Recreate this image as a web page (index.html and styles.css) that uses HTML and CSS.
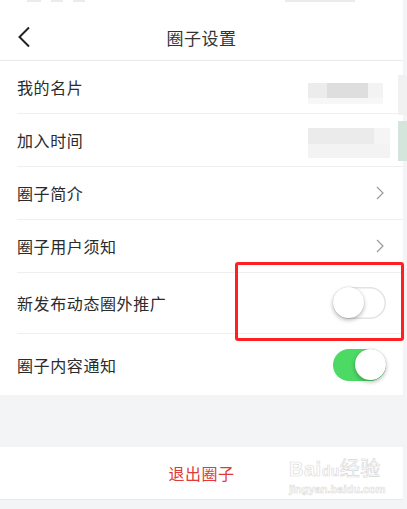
FILE: index.html
```html
<!DOCTYPE html>
<html lang="zh">
<head>
<meta charset="utf-8">
<link rel="stylesheet" href="styles.css">
</head>
<body>
<div class="page">
  <header class="nav">
    <div class="status"><span class="s1"></span><span class="s2"></span><span class="s3"></span><span class="s4"></span></div>
    <svg class="back" width="14" height="22" viewBox="0 0 14 22"><path d="M12 1.5 L2.5 11 L12 20.5" fill="none" stroke="#222" stroke-width="2"/></svg>
    <h1 class="title">圈子设置</h1>
  </header>
  <section class="list">
    <div class="row">
      <span class="label">我的名片</span>
      <div class="blur blur-a"><i></i><i></i></div>
      <div class="edge edge-a"></div>
    </div>
    <div class="row">
      <span class="label">加入时间</span>
      <div class="blur blur-b"><i></i><i></i></div>
      <div class="edge edge-b"></div>
    </div>
    <div class="row">
      <span class="label">圈子简介</span>
      <svg class="chev" width="8" height="14" viewBox="0 0 8 14"><path d="M1 1 L7 7 L1 13" fill="none" stroke="#9a9a9a" stroke-width="1.2"/></svg>
    </div>
    <div class="row">
      <span class="label">圈子用户须知</span>
      <svg class="chev" width="8" height="14" viewBox="0 0 8 14"><path d="M1 1 L7 7 L1 13" fill="none" stroke="#9a9a9a" stroke-width="1.2"/></svg>
    </div>
    <div class="row tall">
      <span class="label">新发布动态圈外推广</span>
      <span class="switch"><span class="knob"></span></span>
      <div class="mark"></div>
    </div>
    <div class="row tall last">
      <span class="label">圈子内容通知</span>
      <span class="switch on"><span class="knob"></span></span>
    </div>
  </section>
  <div class="gap"></div>
  <section class="exit">
    <span class="exit-text">退出圈子</span>
    <div class="wm"><div class="wm1">Bai<span class="paw">du</span><span class="cjk">经验</span></div><div class="wm2">jingyan.baidu.com</div></div>
  </section>
</div>
</body>
</html>
```
FILE: styles.css
```css
html, body { margin: 0; padding: 0; }
*, *::before, *::after { box-sizing: border-box; }
body {
  width: 407px;
  height: 509px;
  overflow: hidden;
  background: #f2f4f6;
  font-family: "Noto Sans CJK SC", "Noto Sans", sans-serif;
  color: #2a2a2a;
}
.page { width: 403px; }
.nav {
  position: relative;
  height: 61px;
  background: #fff;
  border-bottom: 1px solid #e9e9e9;
  display: flex;
  align-items: center;
  justify-content: center;
}
.status { position: absolute; left: 27px; top: 0; display: flex; gap: 10px; }
.status span { display: block; height: 2px; background: #ebebeb; }
.status .s1 { width: 14px; }
.status .s2 { width: 12px; }
.status .s3 { width: 12px; margin-right: 190px; }
.status .s4 { width: 70px; }
.back { position: absolute; left: 17px; top: 26px; }
.title {
  margin: 14px 0 0 0;
  font-size: 17px;
  font-weight: 400;
  color: #333;
  letter-spacing: 0.5px;
}
.list { background: #fff; padding-left: 17px; }
.row {
  position: relative;
  height: 53px;
  display: flex;
  align-items: center;
  justify-content: space-between;
  border-bottom: 1px solid #efefef;
  padding-right: 17px;
}
.row.tall { height: 61px; }
.row.last { border-bottom: none; }
.label { font-size: 16px; color: #2b2b2b; letter-spacing: 0.6px; }
.chev { margin-right: 2px; }
.blur { position: absolute; left: 291px; display: flex; flex-direction: column; }
.blur i { display: block; }
.blur-a { top: 22px; }
.blur-a i:first-child { width: 75px; height: 15px; background: linear-gradient(90deg, #ececec 0 25%, #dedede 25% 80%, #f3f3f3 80%); }
.blur-a i:last-child { width: 75px; height: 6px; background: #f7f7f7; }
.blur-b { top: 14px; }
.blur-b i:first-child { width: 82px; height: 16px; background: linear-gradient(90deg, #ebebeb 0 80%, #f5f5f5 80%); }
.blur-b i:last-child { width: 82px; height: 14px; background: #f3f3f3; }
.edge { position: absolute; left: 381px; width: 9px; }
.edge-a { top: 14px; height: 40px; background: #f1f1f1; }
.edge-b { top: 7px; height: 40px; background: #d4e6dc; }
.switch {
  position: relative;
  width: 53px;
  height: 32px;
  border-radius: 16px;
  background: #fff;
  box-shadow: inset 0 0 0 1.5px #e3e3e3;
}
.knob {
  position: absolute;
  left: 0;
  top: 0;
  width: 31px;
  height: 31px;
  border-radius: 50%;
  background: #fff;
  box-shadow: 0 2px 4px rgba(0,0,0,0.28), 0 0 0 0.5px rgba(0,0,0,0.08);
}
.switch.on { background: #4cd964; box-shadow: none; }
.switch.on .knob { left: 22px; top: 0.5px; }
.mark {
  position: absolute;
  left: 218px;
  top: -11px;
  width: 169px;
  height: 79px;
  border: 3px solid #ff2020;
  border-radius: 3px;
}
.gap { height: 52px; }
.exit {
  position: relative;
  height: 53px;
  background: #fff;
  border-bottom: 1px solid #e8e8e8;
  display: flex;
  align-items: center;
  justify-content: center;
}
.exit-text { font-size: 16px; color: #e23a3a; letter-spacing: 0.5px; }
.wm { position: absolute; left: 289px; top: 6px; color: #fff; text-align: left; }
.wm1 {
  font-family: "Liberation Sans", sans-serif;
  font-size: 20px;
  font-weight: 700;
  -webkit-text-stroke: 0.7px #dedede;
  letter-spacing: 0.5px;
}
.paw { font-size: 14px; }
.cjk { font-family: "Noto Sans CJK SC", sans-serif; font-weight: 400; -webkit-text-stroke: 0.6px #d6d6d6; }
.wm2 {
  font-family: "Liberation Sans", sans-serif;
  font-size: 11px;
  font-weight: 700;
  color: #fff;
  -webkit-text-stroke: 0.6px #dddddd;
  margin-top: 1px;
}
```
